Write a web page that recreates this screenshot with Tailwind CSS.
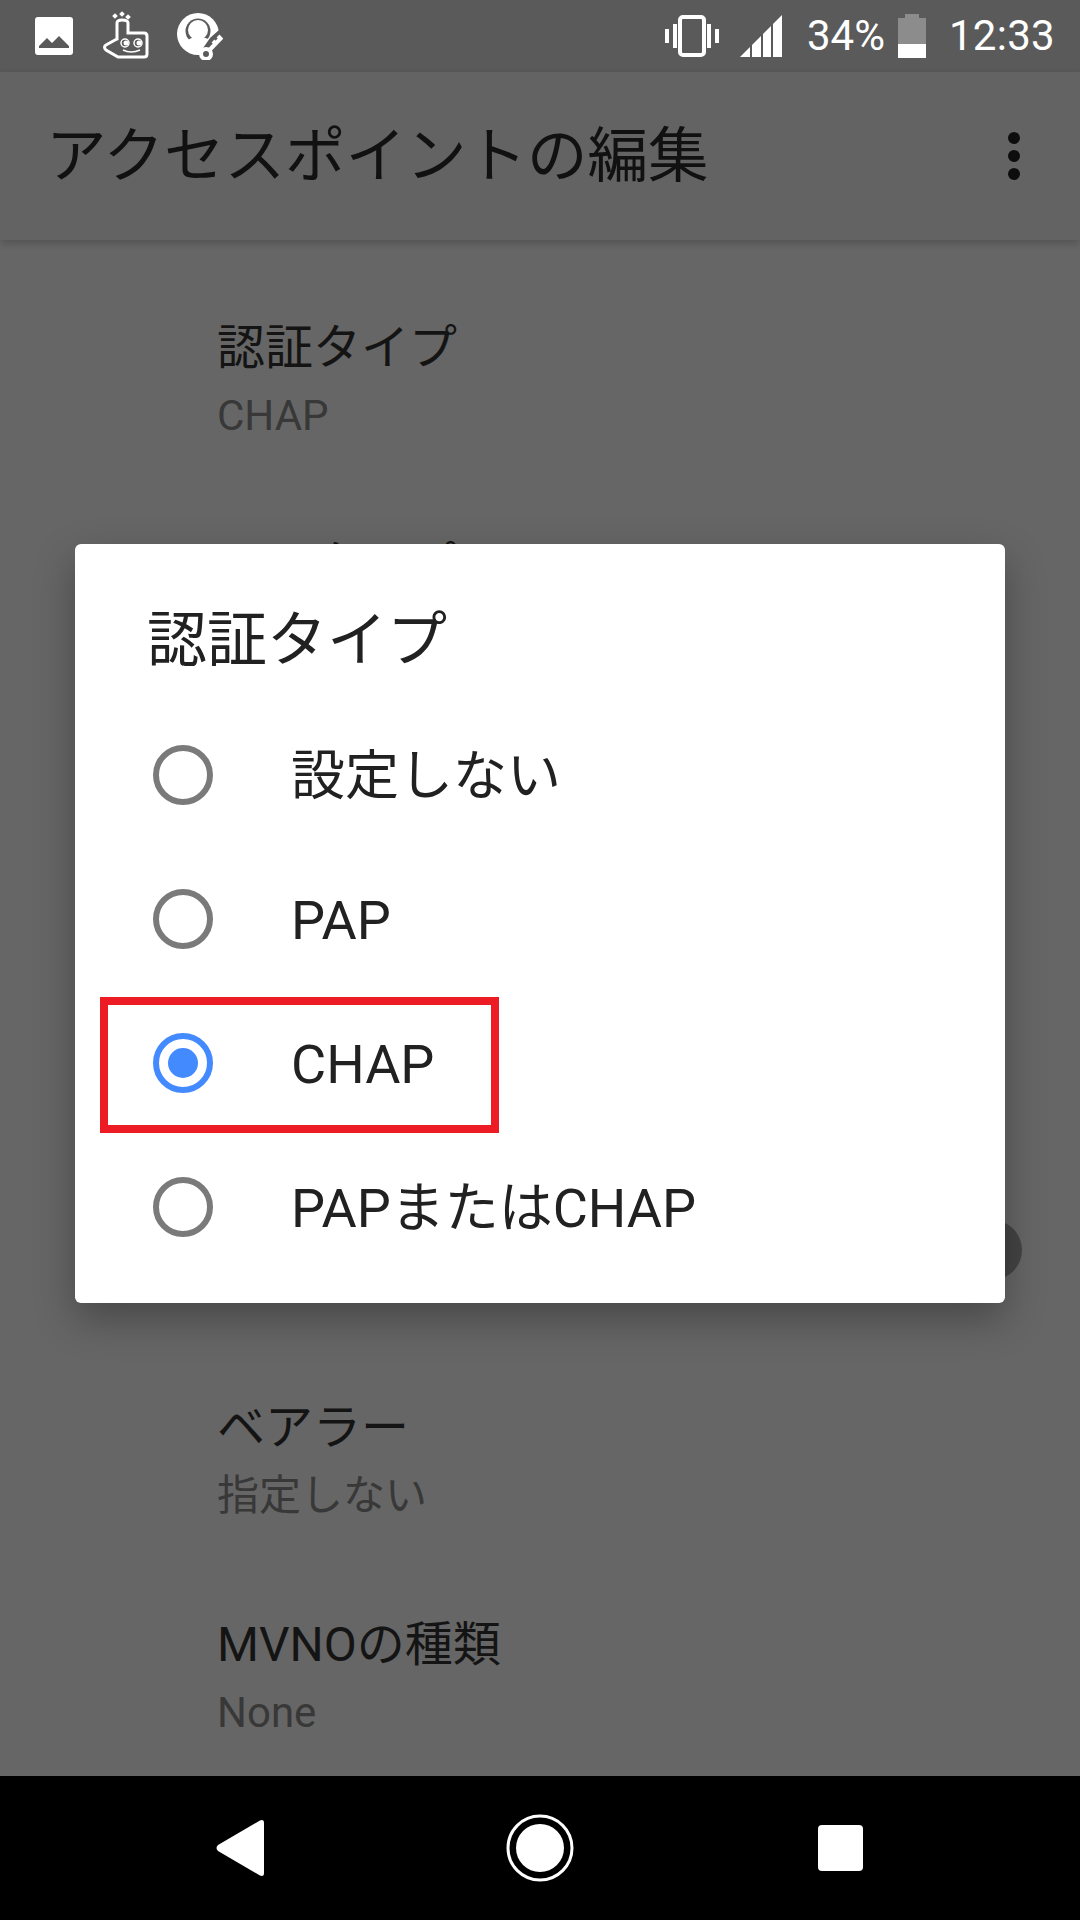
<!DOCTYPE html>
<html lang="ja">
<head>
<meta charset="utf-8">
<script src="https://cdn.jsdelivr.net/npm/@tailwindcss/browser@4"></script>
</head>
<body class="m-0">
<div class="relative w-[1080px] h-[1920px] overflow-hidden flex flex-col bg-[#666666] font-['Roboto','Noto_Sans_CJK_JP',sans-serif]">
  <!-- status bar -->
  <div class="h-[72px] shrink-0 bg-[#5a5a5a] flex items-center pl-[35px] pr-[25px] text-white">
    <svg width="38" height="38" viewBox="0 0 38 38" class="mr-[30px]"><rect width="38" height="38" rx="3" fill="#fff"/><path d="M4 31 L4 29 L12 21 L17 26 L24 19 L34 29 L34 31 Z" fill="#5a5a5a"/></svg>
    <svg width="46" height="46" viewBox="0 0 46 46" class="mr-[28px] overflow-visible" fill="none" stroke="#fff"><path d="M14 10 Q14 7 19 7 Q25 7 25 10 L25 20 L41 20 Q44 20 44 23 L44 41 Q44 44 41 44 L15 44 L3 37 Q0 34 3 32 L12 27 L14 26 Z" stroke-width="3"/><circle cx="22" cy="30" r="4" stroke-width="1.5"/><circle cx="35" cy="30" r="4" stroke-width="1.5"/><circle cx="23" cy="30" r="2.5" fill="#fff" stroke="none"/><circle cx="36" cy="30" r="2.5" fill="#fff" stroke="none"/><path d="M20 37 Q28 41 37 37" stroke-width="1.5"/><g fill="#fff" stroke="none"><rect x="10" y="1" width="4" height="4" transform="rotate(45 12 3)"/><rect x="17" y="-1" width="4" height="4" transform="rotate(45 19 1)"/><rect x="23" y="2" width="4" height="4" transform="rotate(45 25 4)"/></g></svg>
    <svg width="46" height="47" viewBox="0 0 46 47"><circle cx="21" cy="21" r="21" fill="#fff"/><circle cx="21" cy="18" r="12.5" fill="#5a5a5a"/><circle cx="21" cy="17" r="10" fill="#fff"/><path d="M7 35 Q9 24 21 24 Q28 24 34 27 L24 38 L12 38 Z" fill="#fff"/><path d="M33 25 L42 17 L47 17 L47 47 L20 47 L24 38 Z" fill="#5a5a5a"/><circle cx="29" cy="41" r="5" fill="none" stroke="#fff" stroke-width="4"/><path d="M32 37.5 L44 25 M36 28 L40 32 M41 23 L45 27" stroke="#fff" stroke-width="4" fill="none"/></svg>
    <div class="flex-1"></div>
    <svg width="54" height="42" viewBox="0 0 54 42" class="mr-[21px]"><rect x="15" y="2" width="24" height="38" rx="3" fill="none" stroke="#fff" stroke-width="4"/><rect x="0" y="14" width="4" height="14" fill="#fff"/><rect x="8" y="9" width="4" height="24" fill="#fff"/><rect x="42" y="9" width="4" height="24" fill="#fff"/><rect x="50" y="14" width="4" height="14" fill="#fff"/></svg>
    <svg width="42" height="42" viewBox="0 0 42 42" class="mr-[25px]" fill="#fff"><path d="M0 42 L10 32 L10 42 Z"/><path d="M12 30 L21 21 L21 42 L12 42 Z"/><path d="M23 19 L31 11 L31 42 L23 42 Z"/><path d="M33 9 L42 0 L42 42 L33 42 Z"/></svg>
    <span class="text-[42px] leading-none mr-[13px]">34%</span>
    <svg width="28" height="44" viewBox="0 0 28 44" class="mr-[23px]"><path d="M7 0 H21 V4 H28 V44 H0 V4 H7 Z" fill="#8c8c8c"/><rect y="30" width="28" height="14" fill="#fff"/></svg>
    <span class="text-[42px] leading-none tracking-[0.3px]">12:33</span>
  </div>
  <!-- app bar -->
  <div class="h-[168px] shrink-0 bg-[#636363] flex items-center justify-between pl-[46px] pr-[60px] shadow-[0_3px_8px_rgba(0,0,0,0.2)] relative z-10">
    <span class="text-[60.5px] leading-none text-[#111111] pt-[3px]">アクセスポイントの編集</span>
    <div class="flex flex-col gap-[6px]">
      <span class="w-3 h-3 rounded-full bg-[#0d0d0d]"></span>
      <span class="w-3 h-3 rounded-full bg-[#0d0d0d]"></span>
      <span class="w-3 h-3 rounded-full bg-[#0d0d0d]"></span>
    </div>
  </div>
  <!-- list behind dialog -->
  <div class="flex-1 overflow-hidden pt-[32px] pl-[217px] pr-[58px] flex flex-col">
    <div class="h-[217px] shrink-0 pt-[2px] flex flex-col justify-center gap-[22px]"><p class="text-[48px] leading-[46px] text-[#141414]">認証タイプ</p><p class="text-[42px] leading-[46px] text-[#383838]">CHAP</p></div>
    <div class="h-[217px] shrink-0 pt-[2px] flex flex-col justify-center gap-[22px]"><p class="text-[48px] leading-[46px] text-[#141414]">APNタイプ</p><div class="h-[46px]"></div></div>
    <div class="h-[217px] shrink-0"></div>
    <div class="h-[217px] shrink-0"></div>
    <div class="h-[212px] shrink-0 pt-[8px] flex items-center justify-end"><span class="w-[60px] h-[60px] rounded-full bg-[#444444] shrink-0"></span></div>
    <div class="h-[217px] shrink-0 pt-[2px] flex flex-col justify-center gap-[22px]"><p class="text-[48px] leading-[46px] text-[#141414]">ベアラー</p><p class="text-[42px] leading-[46px] text-[#383838]">指定しない</p></div>
    <div class="h-[217px] shrink-0 pt-[2px] flex flex-col justify-center gap-[22px]"><p class="text-[48px] leading-[46px] text-[#141414]">MVNOの種類</p><p class="text-[42px] leading-[46px] text-[#383838]">None</p></div>
  </div>
  <!-- nav bar -->
  <div class="h-[144px] shrink-0 bg-black relative z-10 grid grid-cols-3 items-center px-[90px]">
    <div class="flex justify-center"><svg width="48" height="56" viewBox="0 0 48 56"><path d="M2 25 L44 0.5 Q48 -1 48 3 L48 53 Q48 57 44 55.5 L2 31 Q-1 28 2 25 Z" fill="#fff"/></svg></div>
    <div class="flex justify-center"><svg width="68" height="68" viewBox="0 0 68 68"><circle cx="34" cy="34" r="32" fill="none" stroke="#fff" stroke-width="3"/><circle cx="34" cy="34" r="24" fill="#fff"/></svg></div>
    <div class="flex justify-center"><span class="w-[45px] h-[46px] rounded-[4px] bg-white"></span></div>
  </div>
  <!-- dialog -->
  <div class="absolute left-[75px] top-[544px] w-[930px] h-[759px] bg-white rounded-[6px] shadow-[0_16px_40px_rgba(0,0,0,0.3)] z-20 text-[#212121]">
    <div class="h-[159px] pl-[72px] pt-[67px]"><p class="text-[60px] leading-[60px]">認証タイプ</p></div>
    <div class="flex flex-col">
      <div class="h-[144px] flex items-center pl-[78px] gap-[78px]"><span class="w-[60px] h-[60px] rounded-full border-[6px] border-[#7a7a7a] shrink-0"></span><span class="text-[54px] leading-none mt-[4px]">設定しない</span></div>
      <div class="h-[144px] flex items-center pl-[78px] gap-[78px]"><span class="w-[60px] h-[60px] rounded-full border-[6px] border-[#7a7a7a] shrink-0"></span><span class="text-[54px] leading-none mt-[4px]">PAP</span></div>
      <div class="h-[144px] flex items-center pl-[78px] gap-[78px]"><span class="w-[60px] h-[60px] rounded-full border-[6px] border-[#448aff] shrink-0 flex items-center justify-center"><span class="w-[30px] h-[30px] rounded-full bg-[#448aff]"></span></span><span class="text-[54px] leading-none mt-[4px]">CHAP</span></div>
      <div class="h-[144px] flex items-center pl-[78px] gap-[78px]"><span class="w-[60px] h-[60px] rounded-full border-[6px] border-[#7a7a7a] shrink-0"></span><span class="text-[54px] leading-none mt-[4px]">PAPまたはCHAP</span></div>
    </div>
  </div>
  <!-- red annotation -->
  <div class="absolute left-[100px] top-[997px] w-[399px] h-[136px] border-[8px] border-[#ed1c24] z-30"></div>
</div>
</body>
</html>
